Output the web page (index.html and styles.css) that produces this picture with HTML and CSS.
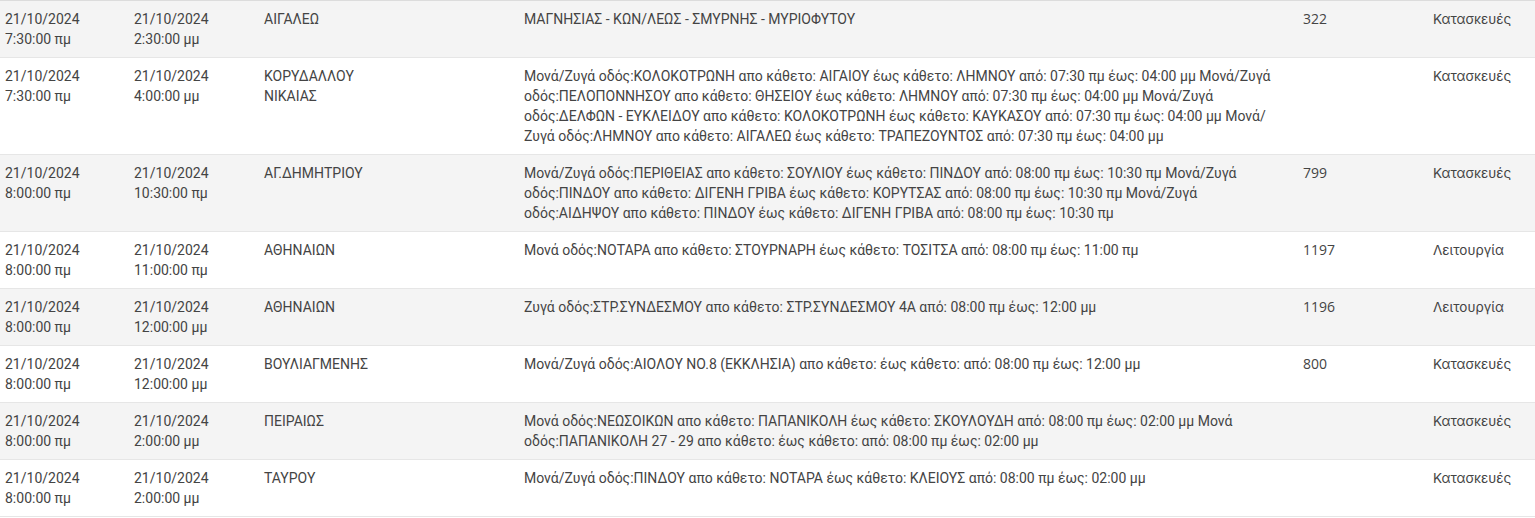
FILE: index.html
```html
<!DOCTYPE html>
<html lang="el">
<head>
<meta charset="utf-8">
<title>Κυκλοφοριακές ρυθμίσεις</title>
<link rel="stylesheet" href="styles.css">
</head>
<body>
<table class="grid">
  <colgroup>
    <col class="c-start"><col class="c-end"><col class="c-area"><col class="c-desc"><col class="c-num"><col class="c-type">
  </colgroup>
  <tbody>
    <tr>
      <td>21/10/2024<br>7:30:00 πμ</td>
      <td>21/10/2024<br>2:30:00 μμ</td>
      <td>ΑΙΓΑΛΕΩ</td>
      <td>ΜΑΓΝΗΣΙΑΣ - ΚΩΝ/ΛΕΩΣ - ΣΜΥΡΝΗΣ - ΜΥΡΙΟΦΥΤΟΥ</td>
      <td class="num">322</td>
      <td class="type">Κατασκευές</td>
    </tr>
    <tr>
      <td>21/10/2024<br>7:30:00 πμ</td>
      <td>21/10/2024<br>4:00:00 μμ</td>
      <td>ΚΟΡΥΔΑΛΛΟΥ<br>ΝΙΚΑΙΑΣ</td>
      <td>Μονά/Ζυγά οδός:ΚΟΛΟΚΟΤΡΩΝΗ απο κάθετο: ΑΙΓΑΙΟΥ έως κάθετο: ΛΗΜΝΟΥ από: 07:30 πμ έως: 04:00 μμ Μονά/Ζυγά οδός:ΠΕΛΟΠΟΝΝΗΣΟΥ απο κάθετο: ΘΗΣΕΙΟΥ έως κάθετο: ΛΗΜΝΟΥ από: 07:30 πμ έως: 04:00 μμ Μονά/Ζυγά οδός:ΔΕΛΦΩΝ - ΕΥΚΛΕΙΔΟΥ απο κάθετο: ΚΟΛΟΚΟΤΡΩΝΗ έως κάθετο: ΚΑΥΚΑΣΟΥ από: 07:30 πμ έως: 04:00 μμ Μονά/Ζυγά οδός:ΛΗΜΝΟΥ απο κάθετο: ΑΙΓΑΛΕΩ έως κάθετο: ΤΡΑΠΕΖΟΥΝΤΟΣ από: 07:30 πμ έως: 04:00 μμ</td>
      <td class="num"></td>
      <td class="type">Κατασκευές</td>
    </tr>
    <tr>
      <td>21/10/2024<br>8:00:00 πμ</td>
      <td>21/10/2024<br>10:30:00 πμ</td>
      <td>ΑΓ.ΔΗΜΗΤΡΙΟΥ</td>
      <td>Μονά/Ζυγά οδός:ΠΕΡΙΘΕΙΑΣ απο κάθετο: ΣΟΥΛΙΟΥ έως κάθετο: ΠΙΝΔΟΥ από: 08:00 πμ έως: 10:30 πμ Μονά/Ζυγά οδός:ΠΙΝΔΟΥ απο κάθετο: ΔΙΓΕΝΗ ΓΡΙΒΑ έως κάθετο: ΚΟΡΥΤΣΑΣ από: 08:00 πμ έως: 10:30 πμ Μονά/Ζυγά οδός:ΑΙΔΗΨΟΥ απο κάθετο: ΠΙΝΔΟΥ έως κάθετο: ΔΙΓΕΝΗ ΓΡΙΒΑ από: 08:00 πμ έως: 10:30 πμ</td>
      <td class="num">799</td>
      <td class="type">Κατασκευές</td>
    </tr>
    <tr>
      <td>21/10/2024<br>8:00:00 πμ</td>
      <td>21/10/2024<br>11:00:00 πμ</td>
      <td>ΑΘΗΝΑΙΩΝ</td>
      <td>Μονά οδός:ΝΟΤΑΡΑ απο κάθετο: ΣΤΟΥΡΝΑΡΗ έως κάθετο: ΤΟΣΙΤΣΑ από: 08:00 πμ έως: 11:00 πμ</td>
      <td class="num">1197</td>
      <td class="type">Λειτουργία</td>
    </tr>
    <tr>
      <td>21/10/2024<br>8:00:00 πμ</td>
      <td>21/10/2024<br>12:00:00 μμ</td>
      <td>ΑΘΗΝΑΙΩΝ</td>
      <td>Ζυγά οδός:ΣΤΡ.ΣΥΝΔΕΣΜΟΥ απο κάθετο: ΣΤΡ.ΣΥΝΔΕΣΜΟΥ 4Α από: 08:00 πμ έως: 12:00 μμ</td>
      <td class="num">1196</td>
      <td class="type">Λειτουργία</td>
    </tr>
    <tr>
      <td>21/10/2024<br>8:00:00 πμ</td>
      <td>21/10/2024<br>12:00:00 μμ</td>
      <td>ΒΟΥΛΙΑΓΜΕΝΗΣ</td>
      <td>Μονά/Ζυγά οδός:ΑΙΟΛΟΥ ΝΟ.8 (ΕΚΚΛΗΣΙΑ) απο κάθετο: έως κάθετο: από: 08:00 πμ έως: 12:00 μμ</td>
      <td class="num">800</td>
      <td class="type">Κατασκευές</td>
    </tr>
    <tr>
      <td>21/10/2024<br>8:00:00 πμ</td>
      <td>21/10/2024<br>2:00:00 μμ</td>
      <td>ΠΕΙΡΑΙΩΣ</td>
      <td>Μονά οδός:ΝΕΩΣΟΙΚΩΝ απο κάθετο: ΠΑΠΑΝΙΚΟΛΗ έως κάθετο: ΣΚΟΥΛΟΥΔΗ από: 08:00 πμ έως: 02:00 μμ Μονά οδός:ΠΑΠΑΝΙΚΟΛΗ 27 - 29 απο κάθετο: έως κάθετο: από: 08:00 πμ έως: 02:00 μμ</td>
      <td class="num"></td>
      <td class="type">Κατασκευές</td>
    </tr>
    <tr>
      <td>21/10/2024<br>8:00:00 πμ</td>
      <td>21/10/2024<br>2:00:00 μμ</td>
      <td>ΤΑΥΡΟΥ</td>
      <td>Μονά/Ζυγά οδός:ΠΙΝΔΟΥ απο κάθετο: ΝΟΤΑΡΑ έως κάθετο: ΚΛΕΙΟΥΣ από: 08:00 πμ έως: 02:00 μμ</td>
      <td class="num"></td>
      <td class="type">Κατασκευές</td>
    </tr>
  </tbody>
</table>
</body>
</html>
```
FILE: styles.css
```css
html, body {
  margin: 0;
  padding: 0;
  background: #ffffff;
}

.grid {
  width: 1535px;
  border-collapse: collapse;
  table-layout: fixed;
  border-top: 1px solid #dcdcdc;
  font-family: Roboto, "Noto Sans", sans-serif;
  font-size: 14px;
  line-height: 20px;
  color: #444444;
}

.c-start { width: 129px; }
.c-end { width: 130px; }
.c-area { width: 260px; }
.c-desc { width: 779px; }
.c-num { width: 130px; }
.c-type { width: 107px; }

.grid td {
  padding: 8px 5px;
  vertical-align: top;
  border-bottom: 1px solid #e6e6e6;
  text-align: left;
}

.grid tr:nth-child(odd) td {
  background: #f4f4f4;
}

.grid td.num {
  font-family: "Open Sans", Roboto, sans-serif;
  font-size: 14px;
}

.grid td.type {
  font-family: Inter, Roboto, sans-serif;
  font-size: 13.5px;
}
```
